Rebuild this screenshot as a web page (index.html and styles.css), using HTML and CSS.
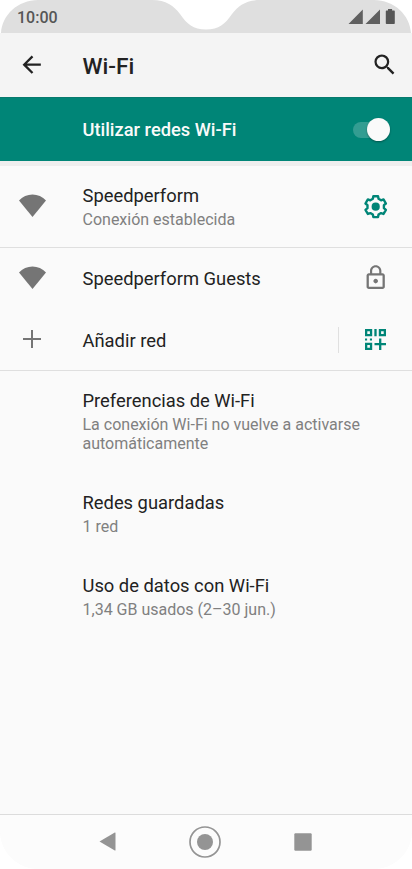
FILE: index.html
```html
<!DOCTYPE html>
<html lang="es">
<head>
<meta charset="utf-8">
<title>Wi-Fi</title>
<link rel="stylesheet" href="styles.css">
</head>
<body>
<div class="phone">
  <header class="status">
    <svg class="status-shape" viewBox="0 0 412 33"><path d="M1 33C2 15 18 0 38 0H152C166 0 174 6 180 14C187 24 193 29.500 206 29.500C219 29.500 225 24 232 14C238 6 246 0 260 0H374C394 0 410 15 411 33Z" fill="#dfdfdf"/></svg>
    <span class="clock">10:00</span>
    <svg class="signals" width="47" height="16" viewBox="0 0 47 16"><path d="M.500 15L14.800 .500V15ZM17.500 15L32 .500V15Z" fill="#606060"/><path d="M37.800 2.200Q37.800 1.500 38.500 1.500H40V0H44.100V1.500H46.100Q46.800 1.500 46.800 2.200V14.200Q46.800 15 46 15H38.600Q37.800 15 37.800 14.200Z" fill="#565656"/></svg>
  </header>
  <div class="appbar">
    <div class="lead"><svg class="icon" viewBox="0 0 24 24"><path d="M20 11H7.830l5.590-5.590L12 4l-8 8 8 8 1.410-1.410L7.830 13H20v-2z" fill="#222"/></svg></div>
    <h1>Wi-Fi</h1>
    <svg class="icon" viewBox="0 0 24 24"><path d="M15.500 14h-.79l-.28-.27A6.471 6.471 0 0 0 16 9.500 6.500 6.500 0 1 0 9.500 16c1.610 0 3.090-.59 4.230-1.570l.27.28v.79l5 4.990L20.490 19l-4.990-5zm-6 0C7.010 14 5 11.990 5 9.500S7.010 5 9.500 5 14 7.010 14 9.500 11.990 14 9.500 14z" fill="#222"/></svg>
  </div>
  <div class="banner">
    <span>Utilizar redes Wi-Fi</span>
    <div class="switch"><i class="thumb"></i></div>
  </div>
  <main>
    <section class="row connected">
      <div class="lead"><svg class="wifi" viewBox="0 0 27 23"><path d="M0 6.500A18.200 18.200 0 0 1 27 6.500L13.500 23Z" fill="#757575"/></svg></div>
      <div class="text"><h2>Speedperform</h2><p>Conexión establecida</p></div>
      <div class="tail"><svg class="icon" viewBox="-12 -12 24 24"><path d="M-2.050-9.100H2.050L2.500-6.900L4.700-5.600L6.850-6.400L8.950-2.800L7.200-1.300V1.300L8.950 2.800L6.850 6.400L4.700 5.600L2.500 6.900L2.050 9.100H-2.050L-2.500 6.900L-4.700 5.600L-6.850 6.400L-8.950 2.800L-7.200 1.300V-1.300L-8.950-2.800L-6.850-6.400L-4.700-5.600L-2.500-6.900Z" fill="none" stroke="#008577" stroke-width="2.100" stroke-linejoin="round"/><circle r="3.600" fill="#008577"/></svg></div>
    </section>
    <section class="row guests">
      <div class="lead"><svg class="wifi" viewBox="0 0 27 23"><path d="M0 6.500A18.200 18.200 0 0 1 27 6.500L13.500 23Z" fill="#757575"/></svg></div>
      <div class="text"><h2>Speedperform Guests</h2></div>
      <div class="tail"><svg class="icon" viewBox="0 0 24 24"><path d="M12 17c1.100 0 2-.9 2-2s-.9-2-2-2-2 .9-2 2 .9 2 2 2zm6-9h-1V6c0-2.760-2.240-5-5-5S7 3.240 7 6v2H6c-1.100 0-2 .9-2 2v10c0 1.100.9 2 2 2h12c1.100 0 2-.9 2-2V10c0-1.100-.9-2-2-2zM8.900 6c0-1.710 1.390-3.100 3.100-3.100s3.100 1.390 3.100 3.100v2H8.900V6zM18 20H6V10h12v10z" fill="#757575"/></svg></div>
    </section>
    <section class="row add">
      <div class="lead"><svg class="plus" viewBox="0 0 18 18"><path d="M9 0V18M0 9H18" stroke="#757575" stroke-width="2"/></svg></div>
      <div class="text"><h2>Añadir red</h2></div>
      <div class="tail divided"><svg class="qr" viewBox="0 0 21 21"><g fill="none" stroke="#008577" stroke-width="2.300"><path d="M1.150 1.150H6.050V6.050H1.150ZM14.950 1.150H19.850V6.050H14.950ZM1.150 14.950H6.050V19.850H1.150ZM15.200 9.500V21M9.500 15.200H21M10.500 0V7.200"/></g><path d="M0 9.500H2.100V11.600H0ZM4.900 9.500H7V11.600H4.900Z" fill="#008577"/></svg></div>
    </section>
    <section class="row prefs"><div class="text"><h2>Preferencias de Wi-Fi</h2><p>La conexión Wi-Fi no vuelve a activarse automáticamente</p></div></section>
    <section class="row saved"><div class="text"><h2>Redes guardadas</h2><p>1 red</p></div></section>
    <section class="row usage"><div class="text"><h2>Uso de datos con Wi-Fi</h2><p>1,34 GB usados (2–30 jun.)</p></div></section>
  </main>
  <nav>
    <svg viewBox="0 0 17 19" width="17" height="19"><path d="M.500 9.500L15.800 .500Q16.500 .200 16.500 1V18Q16.500 18.800 15.800 18.500Z" fill="#949494"/></svg>
    <svg viewBox="0 0 32 32" width="32" height="32"><circle cx="16" cy="16" r="15" fill="none" stroke="#949494" stroke-width="1.700"/><circle cx="16" cy="16" r="8" fill="#949494"/></svg>
    <svg viewBox="0 0 18 18" width="18" height="18"><rect x=".3" y=".3" width="17.400" height="17.400" rx="1.200" fill="#949494"/></svg>
  </nav>
</div>
</body>
</html>
```
FILE: styles.css
```css
* { box-sizing: border-box; margin: 0; padding: 0; }
body { background: #fff; font-family: Roboto, sans-serif; color: #222; }
svg { display: block; flex: none; }
.phone {
  width: 412px; height: 869px; overflow: hidden;
  display: flex; flex-direction: column;
  background: #fafafa; border-radius: 0 0 38px 38px;
}
.status {
  position: relative; flex: none; height: 33px; background: #fff;
  display: flex; justify-content: space-between; align-items: center;
  padding: 0 17px 0 17px;
}
.status-shape { position: absolute; inset: 0; width: 412px; height: 33px; }
.clock { position: relative; font-size: 16px; line-height: 20px; font-weight: 500; color: #565656; padding-top: 2px; }
.signals { position: relative; margin-top: 1px; }
.appbar {
  flex: none; height: 64px; background: #f4f4f4;
  display: flex; align-items: center; padding: 0 14px 0 0;
}
.lead { flex: none; width: 82.500px; padding-right: 18.500px; display: flex; justify-content: center; }
.icon { width: 27.400px; height: 27.400px; }
h1 { flex: 1; font-size: 22.700px; line-height: 27px; font-weight: 500; padding-top: 2px; }
.banner {
  flex: none; height: 64px; background: #008577; color: #fafafa;
  border-top: 1px solid #087a6e;
  display: flex; align-items: center; justify-content: space-between;
  padding: 0 22px 0 82.500px; font-size: 18.300px; font-weight: 500;
}
.switch { width: 37.500px; height: 16px; border-radius: 8px; background: #339d92; display: flex; align-items: center; justify-content: flex-end; }
.thumb { width: 23px; height: 23px; border-radius: 50%; background: #fafafa; box-shadow: 0 1px 2px rgba(0,0,0,.35); }
main { flex: 1; border-top: 5px solid #eeeeee; }
.row { display: flex; align-items: center; }
.text { flex: 1; }
h2 { font-size: 18.350px; line-height: 22px; font-weight: 400; }
p { font-size: 16px; line-height: 19px; color: #808080; margin-top: 3px; }
.connected { height: 82px; border-bottom: 1px solid #dfdfdf; }
.connected .text { padding-top: 1px; }
.connected .wifi { margin-bottom: 2px; }
.guests { height: 61px; }
.guests .text { padding-top: 1px; }
.guests .wifi, .guests .icon { margin-bottom: 2px; }
.add { height: 62px; border-bottom: 1px solid #dfdfdf; }
.add .text { padding-top: 2px; }
.add .plus { margin-bottom: 1px; }
.tail { flex: none; width: 73px; display: flex; justify-content: center; }
.divided { width: 74px; height: 26px; align-items: center; border-left: 1px solid #e0e0e0; }
.wifi { width: 27px; height: 23px; }
.plus { width: 18px; height: 18px; }
.qr { width: 21px; height: 21px; margin-bottom: 1px; }
.prefs, .saved, .usage { padding: 19px 40px 0 82.500px; align-items: flex-start; }
.prefs { height: 102px; }
.saved, .usage { height: 83px; }
nav {
  flex: none; height: 55px; border-top: 1px solid #dcdcdc; background: #fcfcfc;
  display: flex; align-items: center; justify-content: space-between; padding: 0 100px 1px 99px;
}
```
